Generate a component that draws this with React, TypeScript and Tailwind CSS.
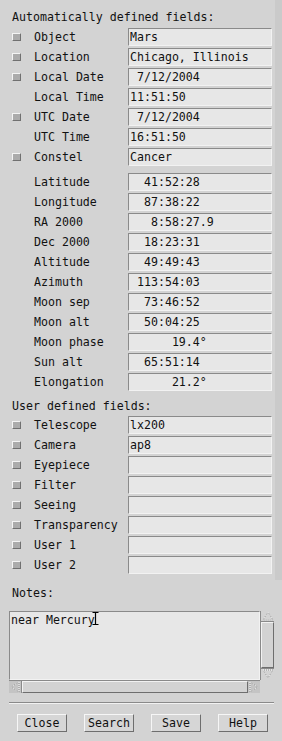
const autoRows: [boolean, string, string][] = [
  [true, "Object", "Mars"],
  [true, "Location", "Chicago, Illinois"],
  [true, "Local Date", " 7/12/2004"],
  [false, "Local Time", "11:51:50"],
  [true, "UTC Date", " 7/12/2004"],
  [false, "UTC Time", "16:51:50"],
  [true, "Constel", "Cancer"],
];

const computed: [string, string][] = [
  ["Latitude", "  41:52:28"],
  ["Longitude", "  87:38:22"],
  ["RA 2000", "   8:58:27.9"],
  ["Dec 2000", "  18:23:31"],
  ["Altitude", "  49:49:43"],
  ["Azimuth", " 113:54:03"],
  ["Moon sep", "  73:46:52"],
  ["Moon alt", "  50:04:25"],
  ["Moon phase", "      19.4°"],
  ["Sun alt", "  65:51:14"],
  ["Elongation", "      21.2°"],
];

const userRows: [string, string][] = [
  ["Telescope", "lx200"],
  ["Camera", "ap8"],
  ["Eyepiece", ""],
  ["Filter", ""],
  ["Seeing", ""],
  ["Transparency", ""],
  ["User 1", ""],
  ["User 2", ""],
];

function Check() {
  return (
    <div className="w-[9px] h-[8px] bg-[#ababab] border-t border-l border-t-[#f4f4f4] border-l-[#f4f4f4] border-b border-r border-b-[#707070] border-r-[#707070]" />
  );
}

function Row({ check, label, value }: { check?: boolean; label: string; value: string }) {
  return (
    <div className="flex items-center h-[18px]">
      <div className="w-[34px] pl-[12px] flex items-center">{check && <Check />}</div>
      <div className="w-[94px] whitespace-pre leading-[18px]">{label}</div>
      <div className="w-[144px] h-[18px] bg-[#e7e7e7] border-t border-l border-t-[#8a8a8a] border-l-[#8a8a8a] border-b border-r border-b-[#f2f2f2] border-r-[#f2f2f2] pl-[1px] whitespace-pre leading-[16px]">
        {value}
      </div>
    </div>
  );
}

function Arrow({ dir }: { dir: "up" | "down" | "left" | "right" }) {
  const pts = {
    up: "6,2 11,10 1,10",
    down: "1,1 11,1 6,9",
    left: "10,1 10,11 2,6",
    right: "2,1 2,11 10,6",
  }[dir];
  return (
    <svg width="12" height="12" viewBox="0 0 12 12">
      <polygon points={pts} fill="none" stroke="#f6f6f6" strokeWidth="1" strokeDasharray="1 1" />
      <polygon points={pts} fill="none" stroke="#9a9a9a" strokeWidth="1" strokeDasharray="1 1" strokeDashoffset="1" />
    </svg>
  );
}

function Button({ label }: { label: string }) {
  return (
    <div className="w-[50px] h-[18px] flex items-center justify-center bg-[#d6d6d6] border-t border-l border-t-[#f6f6f6] border-l-[#f6f6f6] border-b border-r border-b-[#6e6e6e] border-r-[#6e6e6e] leading-[16px]">
      {label}
    </div>
  );
}

export default function App() {
  return (
    <div className="w-[282px] h-[741px] bg-[#d3d3d3] text-[#111] text-[11.6px] font-['DejaVu_Sans_Mono',monospace] overflow-hidden">
      {/* fields */}
      <div className="flex h-[580px]">
        <div className="w-[275px] pt-[8px]">
          <div className="pl-[12px] h-[18px] leading-[18px] mb-[2px]">Automatically defined fields:</div>
          <div className="flex flex-col gap-[2px]">
            {autoRows.map(([c, l, v]) => (
              <Row key={l} check={c} label={l} value={v} />
            ))}
          </div>
          <div className="flex flex-col gap-[2px] mt-[7px]">
            {computed.map(([l, v]) => (
              <Row key={l} label={l} value={v} />
            ))}
          </div>
          <div className="pl-[12px] h-[19px] leading-[18px] mt-[6px]">User defined fields:</div>
          <div className="flex flex-col gap-[2px]">
            {userRows.map(([l, v]) => (
              <Row key={l} check label={l} value={v} />
            ))}
          </div>
        </div>
        <div className="flex-1 bg-[#cacaca]" />
      </div>

      {/* notes */}
      <div className="pl-[12px] h-[18px] leading-[18px] mt-[4px]">Notes:</div>
      <div className="ml-[9px] mt-[9px] w-[265px]">
        <div className="flex h-[69px]">
          <div className="relative w-[251px] bg-[#e7e7e7] border-t border-l border-t-[#8a8a8a] border-l-[#8a8a8a] border-b border-r border-b-[#f2f2f2] border-r-[#f2f2f2] pl-[1px] leading-[16px] whitespace-pre">
            near Mercury
            <svg className="absolute left-[82px] top-[0px]" width="7" height="13" viewBox="0 0 7 13">
              <path d="M0.5 0.5h6M3.5 0.5v12M0.5 12.5h6" stroke="#000" strokeWidth="1.2" fill="none" />
            </svg>
          </div>
          <div className="w-[14px] flex flex-col bg-[#c4c4c4] border-l border-l-[#8a8a8a]">
            <div className="h-[11px] flex items-center justify-center bg-[#d3d3d3] border-b border-b-[#8a8a8a]">
              <Arrow dir="up" />
            </div>
            <div className="flex-1 bg-[#d3d3d3] border-t border-l border-t-[#f2f2f2] border-l-[#f2f2f2] border-b border-r border-b-[#6e6e6e] border-r-[#6e6e6e]" />
            <div className="h-[12px] flex items-center justify-center bg-[#d3d3d3] border-t border-t-[#8a8a8a]">
              <Arrow dir="down" />
            </div>
          </div>
        </div>
        <div className="flex h-[13px]">
          <div className="w-[251px] flex bg-[#c4c4c4] border-t border-t-[#8a8a8a]">
            <div className="w-[13px] flex items-center justify-center border-r border-r-[#8a8a8a]">
              <Arrow dir="left" />
            </div>
            <div className="flex-1 bg-[#d3d3d3] border-t border-l border-t-[#f2f2f2] border-l-[#f2f2f2] border-b border-r border-b-[#6e6e6e] border-r-[#6e6e6e]" />
            <div className="w-[12px] flex items-center justify-center">
              <Arrow dir="right" />
            </div>
          </div>
        </div>
      </div>

      {/* separator */}
      <div className="ml-[9px] mt-[9px] w-[265px] h-[2px] border-t border-t-[#8a8a8a] border-b border-b-[#f2f2f2]" />

      {/* buttons */}
      <div className="flex gap-[17px] pl-[17px] mt-[10px]">
        <Button label="Close" />
        <Button label="Search" />
        <Button label="Save" />
        <Button label="Help" />
      </div>
    </div>
  );
}
